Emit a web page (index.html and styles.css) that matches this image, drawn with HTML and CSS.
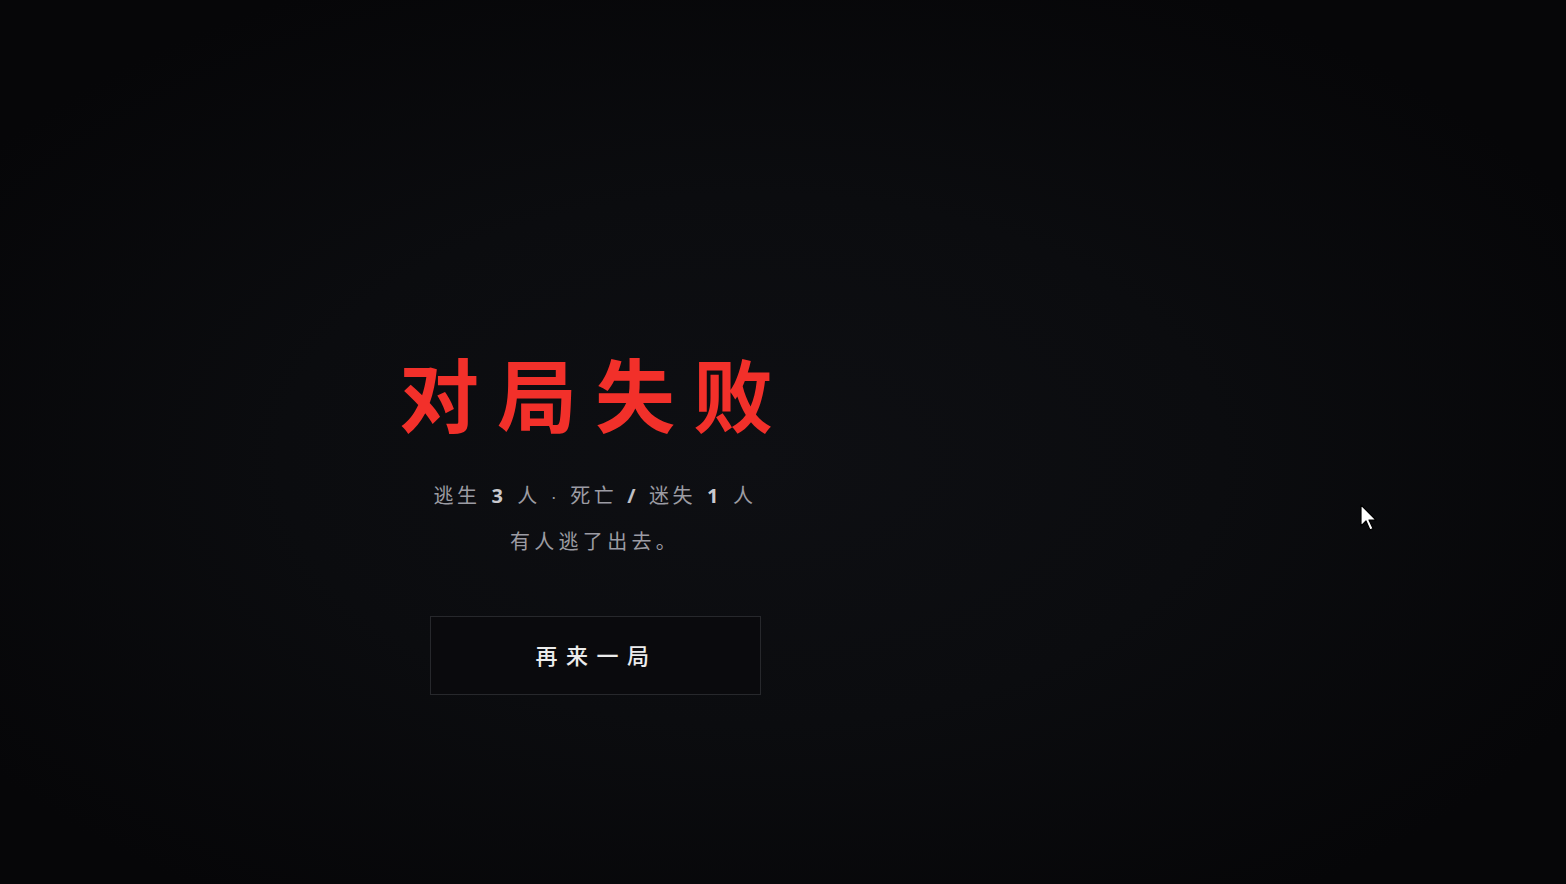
FILE: index.html
```html
<!DOCTYPE html>
<html lang="zh-CN">
<head>
<meta charset="utf-8">
<title>对局失败</title>
<link rel="stylesheet" href="styles.css">
</head>
<body>
<main class="stage">
  <section class="panel">
    <h1 class="title">对局失败</h1>
    <p class="stats">逃生 <b>3</b> 人 <span class="dot">·</span> 死亡 <span class="sep">/</span> 迷失 <b>1</b> 人</p>
    <p class="note">有人逃了出去。</p>
    <button class="retry" type="button">再来一局</button>
  </section>
</main>
<svg class="cursor" width="20" height="28" viewBox="0 0 20 28" aria-hidden="true">
  <path d="M1 1 L1 22 L6 17 L10 26 L13 24.5 L9 16 L16 16 Z" fill="#fff" stroke="#000" stroke-width="1.2" stroke-linejoin="round"/>
</svg>
</body>
</html>
```
FILE: styles.css
```css
html, body {
  margin: 0;
  padding: 0;
  height: 100%;
}
body {
  width: 1566px;
  height: 884px;
  overflow: hidden;
  background: radial-gradient(ellipse 60% 60% at 48% 52%, #0e0f13 0%, #0b0c0f 50%, #060608 100%);
  font-family: "Noto Sans CJK SC", "Noto Sans", sans-serif;
  position: relative;
}
.stage {
  display: flex;
  height: 100%;
}
.panel {
  width: 1190px;
  display: flex;
  flex-direction: column;
  align-items: center;
  padding-top: 341px;
  box-sizing: border-box;
}
.title {
  margin: 0;
  font-size: 80px;
  line-height: 100px;
  font-weight: 700;
  color: #f2302a;
  letter-spacing: 18px;
}
.stats {
  margin: 39px 0 0;
  font-size: 20px;
  line-height: 30px;
  color: #9c9ca3;
  letter-spacing: 3.5px;
}
.stats b {
  font-family: "Noto Sans", "Open Sans", sans-serif;
  color: #c9c9ce;
  font-weight: 700;
  margin: 0 3px;
}
.stats .dot {
  font-family: "Liberation Sans", sans-serif;
  font-size: 18px;
  margin: 0 2px;
}
.stats .sep {
  font-family: "Noto Sans", sans-serif;
  font-weight: 700;
  color: #c0c0c5;
  margin: 0 2px;
}
.note {
  margin: 14px 0 0;
  font-size: 20px;
  line-height: 30px;
  color: #9c9ca3;
  letter-spacing: 4.3px;
}
.retry {
  margin-top: 60px;
  width: 331px;
  height: 79px;
  background: #0a0a0d;
  border: 1.5px solid #27282c;
  color: #ececec;
  font-family: inherit;
  font-size: 22px;
  font-weight: 500;
  letter-spacing: 8.5px;
  padding: 0 0 4px 3px;
  cursor: pointer;
}
.cursor {
  position: absolute;
  left: 1360px;
  top: 504px;
}
```
